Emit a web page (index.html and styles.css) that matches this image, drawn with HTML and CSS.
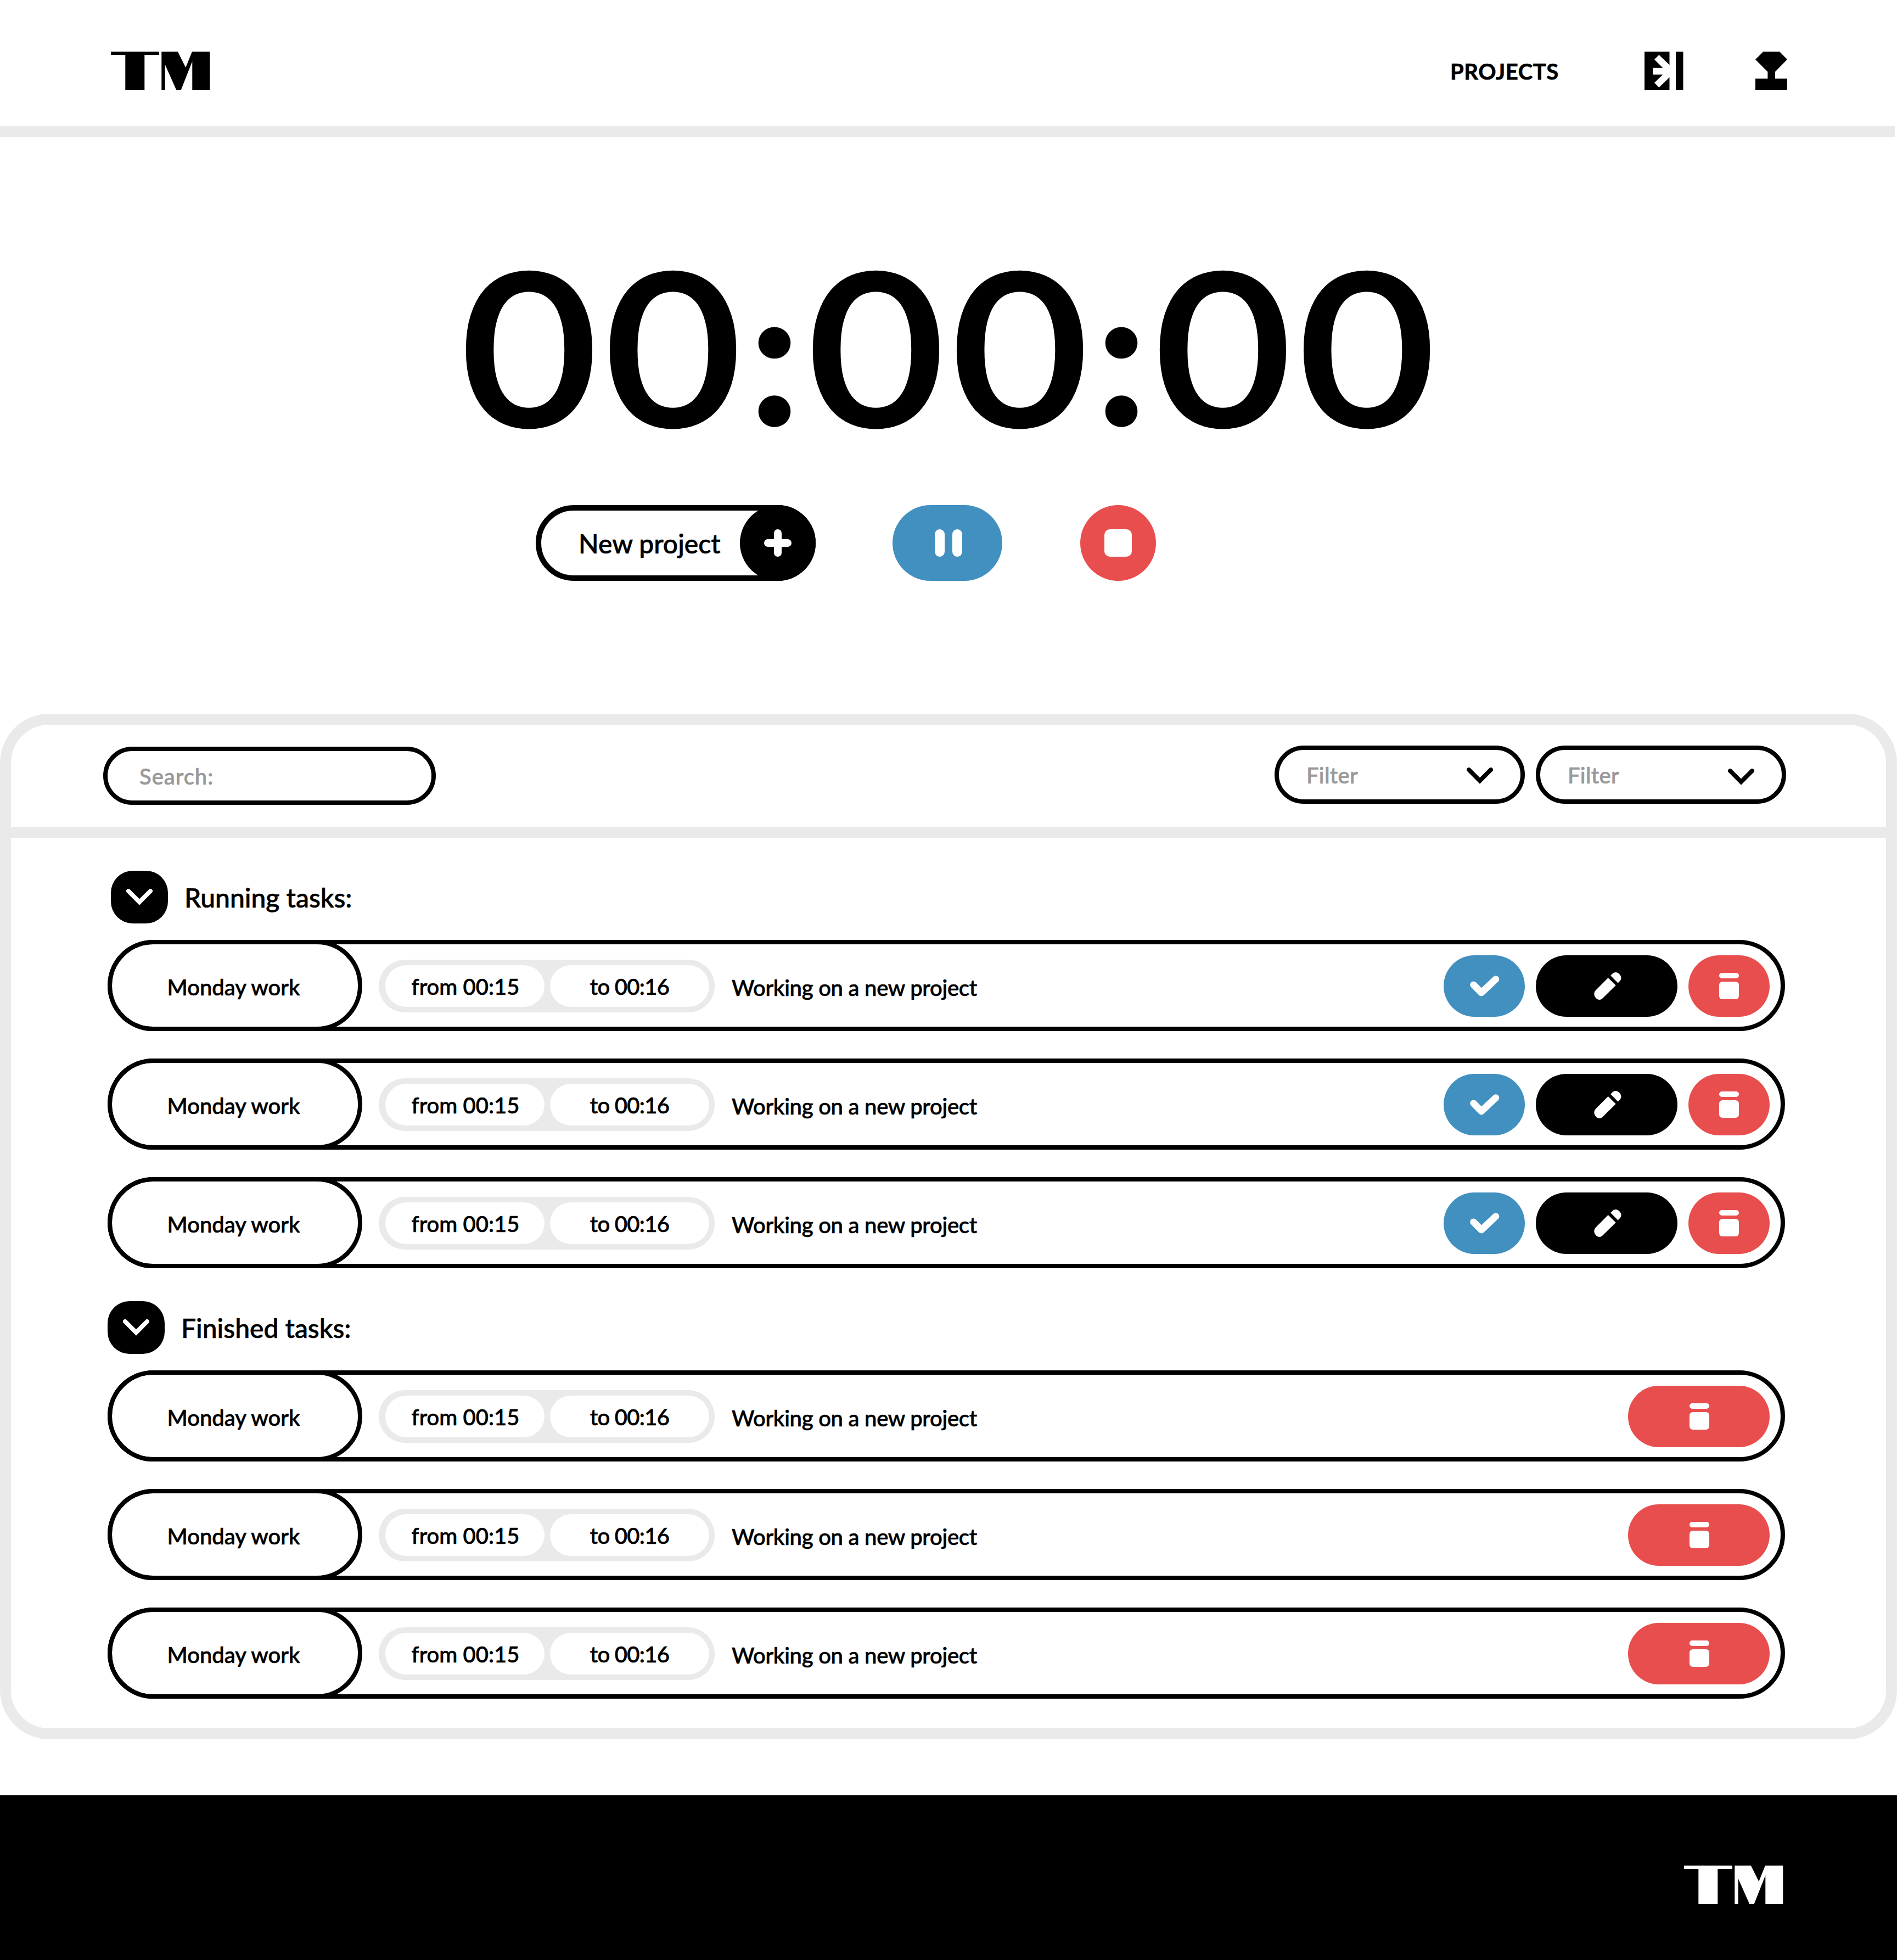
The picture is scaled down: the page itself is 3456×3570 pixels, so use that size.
FILE: index.html
```
<!DOCTYPE html>
<html lang="en">
<head>
  <meta charset="utf-8">
  <title>TM</title>
  <link rel="stylesheet" href="styles.css">
</head>
<body>
  <svg class="sprite" aria-hidden="true">
    <symbol id="logo" viewBox="0 0 181 70">
      <path d="M0 0H88V6H61.3V70H26.3V6H0ZM92.3 0H121.8L136.3 29L148 0H180.3V70H148.3V17.7L127.7 70H119.3L98.7 23.7V70H92.3Z"/>
    </symbol>
    <symbol id="exit" viewBox="0 0 71 70">
      <path d="M0 0H45.5V24.3L26.5 6L18 14.3L33.5 29.7H15.3V41.7H33.5L18 56.7L26.5 65.3L45.5 46.7V70H0ZM57 0H70.5V70H57Z"/>
    </symbol>
    <symbol id="user" viewBox="0 0 58 70">
      <path d="M14.5 0H44L58 14.3L36 36.7V49.3H58V70H0V49.3H22.4V36.7L0 14.3Z"/>
    </symbol>
    <symbol id="chevron" viewBox="0 0 48 30">
      <path d="M4 4L24 24L44 4" fill="none" stroke="currentColor" stroke-width="8" stroke-linecap="round"/>
    </symbol>
    <symbol id="plus" viewBox="0 0 50 50">
      <rect x="18" width="14" height="50" rx="7"/><rect y="18" width="50" height="14" rx="7"/>
    </symbol>
    <symbol id="pause" viewBox="0 0 50 50">
      <rect width="18" height="50" rx="9"/><rect x="32" width="18" height="50" rx="9"/>
    </symbol>
    <symbol id="stop" viewBox="0 0 50 50"><rect width="50" height="50" rx="10"/></symbol>
    <symbol id="check" viewBox="0 0 54 38">
      <path d="M6.5 16.7L20.8 31.2L47 6.5" fill="none" stroke="currentColor" stroke-width="12.6" stroke-linecap="round" stroke-linejoin="round"/>
    </symbol>
    <symbol id="pencil" viewBox="0 0 50 50">
      <path d="M25.7 10L39.7 23.8L16 47C12 51.5 7 50.3 3.8 47.2C-.8 42.5 -.5 37 2.8 33ZM30.2 6L33 3C37-1 42-1 46 3C50.5 7.500 50.5 12.500 47 16L43.6 19.5Z"/>
    </symbol>
    <symbol id="trash" viewBox="0 0 36 48">
      <rect width="36" height="10" rx="5"/><rect y="16" width="36" height="32" rx="6"/>
    </symbol>
  </svg>

  <header class="header">
    <svg class="logo" role="img" aria-label="TM"><use href="#logo"/></svg>
    <nav class="nav">
      <a class="nav-link">PROJECTS</a>
      <svg class="icon-exit"><use href="#exit"/></svg>
      <svg class="icon-user"><use href="#user"/></svg>
    </nav>
  </header>

  <main>
    <section class="hero">
      <div class="timer">
        <span class="digits">00</span><span class="colon">:</span><span class="digits">00</span><span class="colon">:</span><span class="digits">00</span>
      </div>
      <div class="controls">
        <div class="new-project"><span>New project</span><i class="plus"><svg class="icon-50"><use href="#plus"/></svg></i></div>
        <div class="pause"><svg class="icon-50"><use href="#pause"/></svg></div>
        <div class="stop"><svg class="icon-50"><use href="#stop"/></svg></div>
      </div>
    </section>

    <section class="panel">
      <div class="toolbar">
        <div class="search">Search:</div>
        <div class="filters">
          <div class="filter">Filter<svg class="chevron"><use href="#chevron"/></svg></div>
          <div class="filter filter-low">Filter<svg class="chevron"><use href="#chevron"/></svg></div>
        </div>
      </div>

      <div class="tasks">
        <div class="heading heading-inset"><i class="toggle"><svg class="chevron"><use href="#chevron"/></svg></i><h2>Running tasks:</h2></div>
        <div class="list">
          <div class="task">
            <div class="name">Monday work</div>
            <div class="times"><span>from 00:15</span><span class="to">to 00:16</span></div>
            <div class="note">Working on a new project</div>
            <div class="actions"><i class="btn done"><svg class="icon-check"><use href="#check"/></svg></i><i class="btn edit"><svg class="icon-50"><use href="#pencil"/></svg></i><i class="btn delete"><svg class="icon-trash"><use href="#trash"/></svg></i></div>
          </div>
          <div class="task">
            <div class="name">Monday work</div>
            <div class="times"><span>from 00:15</span><span class="to">to 00:16</span></div>
            <div class="note">Working on a new project</div>
            <div class="actions"><i class="btn done"><svg class="icon-check"><use href="#check"/></svg></i><i class="btn edit"><svg class="icon-50"><use href="#pencil"/></svg></i><i class="btn delete"><svg class="icon-trash"><use href="#trash"/></svg></i></div>
          </div>
          <div class="task">
            <div class="name">Monday work</div>
            <div class="times"><span>from 00:15</span><span class="to">to 00:16</span></div>
            <div class="note">Working on a new project</div>
            <div class="actions"><i class="btn done"><svg class="icon-check"><use href="#check"/></svg></i><i class="btn edit"><svg class="icon-50"><use href="#pencil"/></svg></i><i class="btn delete"><svg class="icon-trash"><use href="#trash"/></svg></i></div>
          </div>
        </div>

        <div class="heading heading-next"><i class="toggle"><svg class="chevron"><use href="#chevron"/></svg></i><h2>Finished tasks:</h2></div>
        <div class="list">
          <div class="task">
            <div class="name">Monday work</div>
            <div class="times"><span>from 00:15</span><span class="to">to 00:16</span></div>
            <div class="note">Working on a new project</div>
            <div class="actions"><i class="btn delete wide"><svg class="icon-trash"><use href="#trash"/></svg></i></div>
          </div>
          <div class="task">
            <div class="name">Monday work</div>
            <div class="times"><span>from 00:15</span><span class="to">to 00:16</span></div>
            <div class="note">Working on a new project</div>
            <div class="actions"><i class="btn delete wide"><svg class="icon-trash"><use href="#trash"/></svg></i></div>
          </div>
          <div class="task">
            <div class="name">Monday work</div>
            <div class="times"><span>from 00:15</span><span class="to">to 00:16</span></div>
            <div class="note">Working on a new project</div>
            <div class="actions"><i class="btn delete wide"><svg class="icon-trash"><use href="#trash"/></svg></i></div>
          </div>
        </div>
      </div>
    </section>
  </main>

  <footer class="footer"><svg class="logo" role="img" aria-label="TM"><use href="#logo"/></svg></footer>
</body>
</html>
```

FILE: styles.css
```
* { box-sizing: border-box; }

body {
  margin: 0;
  background: #fff;
  color: #000;
  font: 500 40px/48px Lato, sans-serif;
  -webkit-text-stroke: .7px currentColor;
}

svg { display: block; flex: none; fill: currentColor; }
.sprite { width: 0; height: 0; position: absolute; }
.logo { width: 181px; height: 70px; }
.icon-exit { width: 71px; height: 70px; }
.icon-user { width: 58px; height: 70px; }
.icon-50 { width: 50px; height: 50px; }
.icon-check { width: 54px; height: 38px; }
.icon-trash { width: 36px; height: 48px; }
.chevron { width: 48px; height: 30px; }

/* Header */
.header {
  width: 3452px;
  height: 250px;
  padding: 28px 196px 0 202px;
  border-bottom: 20px solid #eaeaea;
  display: flex;
  align-items: center;
  justify-content: space-between;
}
.nav { display: flex; align-items: center; }
.nav-link { width: 354px; padding-top: 1px; font-weight: 700; letter-spacing: .6px; }
.icon-exit { margin-right: 131px; }

/* Timer */
.hero { height: 1050px; padding-top: 177px; }
.timer {
  width: 1788px;
  height: 400px;
  margin-left: 833px;
  display: flex;
  align-items: baseline;
  font-size: 384px;
  line-height: 400px;
  white-space: nowrap;
}
.digits {
  width: 524px;
  text-align: center;
  letter-spacing: 13.4px;
  text-indent: 13.4px;
  transform: scaleX(1.11);
  -webkit-text-stroke: 7px #000;
}
.colon { width: 108px; display: flex; justify-content: center; font-size: 356px; font-weight: 900; }

.controls { display: flex; margin: 93px 0 0 976px; gap: 140px; }
.new-project {
  width: 510px;
  height: 138px;
  padding-left: 68px;
  border: 10px solid #000;
  border-radius: 69px;
  display: flex;
  align-items: center;
  justify-content: space-between;
  font-size: 48px;
}
.new-project span { padding-top: 2px; }
.plus, .pause, .stop {
  height: 138px;
  border-radius: 69px;
  display: flex;
  align-items: center;
  justify-content: center;
  color: #fff;
}
.plus { width: 138px; margin-right: -10px; background: #000; }
.pause { width: 200px; padding-left: 3px; background: #4190c0; }
.stop { width: 138px; margin-left: 2px; background: #e94e4e; }

/* Task panel */
.panel { height: 1868px; border: 20px solid #eaeaea; border-radius: 90px; }
.toolbar {
  height: 206px;
  padding: 0 182px 0 168px;
  border-bottom: 20px solid #eaeaea;
  display: flex;
  align-items: center;
  justify-content: space-between;
}
.search, .filter {
  height: 106px;
  border: 8px solid #000;
  border-radius: 53px;
  display: flex;
  align-items: center;
  color: #999;
}
.search { width: 606px; padding: 2px 0 0 58px; letter-spacing: 1px; }
.filters { display: flex; gap: 20px; margin-bottom: 4px; }
.filter { width: 456px; padding: 1px 50px 0; justify-content: space-between; letter-spacing: .3px; }
.filter .chevron { color: #000; margin-top: 3px; }
.filter-low .chevron { margin-top: 7px; }

.tasks { padding: 60px 184px 0 176px; }
.heading { display: flex; align-items: center; gap: 30px; margin-bottom: 30px; }
.heading-inset { margin-left: 6px; }
.heading-next { margin-top: 60px; }
.heading h2 { margin: 0; padding-top: 2px; font-size: 48px; font-weight: 500; line-height: 58px; }
.toggle {
  width: 104px;
  height: 96px;
  border-radius: 40px;
  background: #000;
  color: #fff;
  display: flex;
  align-items: center;
  justify-content: center;
}

.list { display: flex; flex-direction: column; gap: 50px; }
.task {
  height: 166px;
  border: 8px solid #000;
  border-radius: 83px;
  display: flex;
  align-items: center;
}
.name {
  width: 464px;
  height: 166px;
  margin-left: -8px;
  padding: 5px 5px 0 0;
  border: 8px solid #000;
  border-radius: 83px;
  display: flex;
  align-items: center;
  justify-content: center;
}
.times {
  height: 96px;
  margin: 2px 0 0 30px;
  padding: 10px 10px 10px 12px;
  border-radius: 48px;
  background: #eaeaea;
  display: flex;
  gap: 10px;
}
.times span {
  width: 290px;
  padding: 2px 0 0 2px;
  border-radius: 38px;
  background: #fff;
  display: flex;
  align-items: center;
  justify-content: center;
}
.times .to { padding-left: 0; letter-spacing: -.7px; }
.note { margin-left: 31px; padding-top: 8px; letter-spacing: -.28px; }
.actions { margin: 2px 20px 0 auto; display: flex; gap: 20px; }
.btn {
  width: 148px;
  height: 112px;
  border-radius: 56px;
  display: flex;
  align-items: center;
  justify-content: center;
  color: #fff;
}
.done { padding-left: 2px; background: #4190c0; }
.edit { width: 258px; padding-left: 4px; background: #000; }
.delete { background: #e94e4e; }
.wide { width: 258px; padding-left: 2px; }

/* Footer */
.footer {
  height: 300px;
  margin-top: 102px;
  padding: 26px 207px 0 0;
  background: #000;
  color: #fff;
  display: flex;
  align-items: center;
  justify-content: flex-end;
}
```
